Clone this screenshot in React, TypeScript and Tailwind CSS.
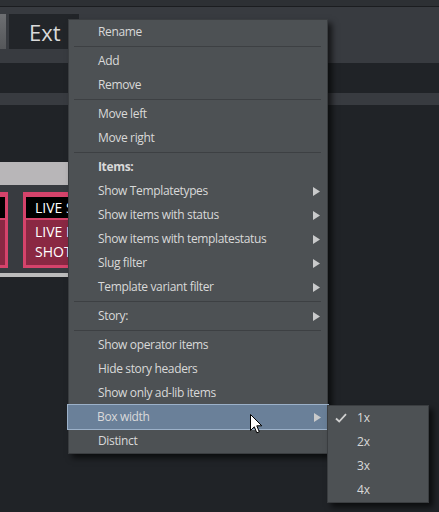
import React from "react";

type Row =
  | { kind: "sep" }
  | { kind: "item"; label: string; sub?: boolean; bold?: boolean; active?: boolean };

const rows: Row[] = [
  { kind: "item", label: "Rename" },
  { kind: "sep" },
  { kind: "item", label: "Add" },
  { kind: "item", label: "Remove" },
  { kind: "sep" },
  { kind: "item", label: "Move left" },
  { kind: "item", label: "Move right" },
  { kind: "sep" },
  { kind: "item", label: "Items:", bold: true },
  { kind: "item", label: "Show Templatetypes", sub: true },
  { kind: "item", label: "Show items with status", sub: true },
  { kind: "item", label: "Show items with templatestatus", sub: true },
  { kind: "item", label: "Slug filter", sub: true },
  { kind: "item", label: "Template variant filter", sub: true },
  { kind: "sep" },
  { kind: "item", label: "Story:", sub: true },
  { kind: "sep" },
  { kind: "item", label: "Show operator items" },
  { kind: "item", label: "Hide story headers" },
  { kind: "item", label: "Show only ad-lib items" },
  { kind: "item", label: "Box width", sub: true, active: true },
  { kind: "item", label: "Distinct" },
];

function SubArrow() {
  return (
    <svg width="7" height="9" viewBox="0 0 7 9" className="absolute right-[7px] top-[8px]">
      <polygon points="0,0 7,4.5 0,9" fill="#c9cacb" />
    </svg>
  );
}

function MenuRow({ row }: { row: Row }) {
  if (row.kind === "sep") {
    return (
      <div className="h-[5px] flex items-center pl-[5px] pr-[6px]">
        <div className="h-px w-full bg-[#3d4043]" />
      </div>
    );
  }
  return (
    <div
      className={
        "relative h-[24px] flex items-center pl-[29px] text-[12px] tracking-[-0.35px] " +
        (row.active ? "bg-[#6a8099] outline outline-1 outline-[#9cb1c9] -mx-px" : "") +
        (row.bold ? " font-bold" : "")
      }
    >
      <span className="text-[#d9d9d9]">{row.label}</span>
      {row.sub && <SubArrow />}
    </div>
  );
}

export default function App() {
  return (
    <div
      className="relative w-[439px] h-[512px] overflow-hidden bg-[#202327]"
      style={{ fontFamily: '"Open Sans", "Noto Sans", sans-serif' }}
    >
      {/* top strip */}
      <div className="h-[6px] bg-[#2d3034]" />
      <div className="h-px bg-[#1b1d20]" />

      {/* tab bar */}
      <div className="h-[56px] bg-[#383b40] flex items-start pt-[7px] gap-[3px]">
        <div className="w-[6px] h-[35px] bg-gradient-to-b from-[#6d6f72] to-[#55575a]" />
        <div className="w-[70px] h-[35px] bg-[#222529] flex items-center pl-[20px]">
          <span className="text-[22px] text-[#dadada] leading-none">Ext</span>
        </div>
      </div>

      <div className="h-[30px] bg-[#202327]" />
      <div className="h-[12px] bg-[#383b40]" />
      <div className="h-[57px]" />

      {/* rundown, only the part left of the menu is visible */}
      <div className="w-[68px] overflow-hidden">
        <div className="h-[23px] bg-[#b8b6b8]" />
        <div className="h-[88px] bg-[#383b40] pt-[7px] flex gap-[15px]">
          <div className="w-[8px] shrink-0 h-[76px] bg-[#d5436b] pt-[5px] pr-[3px] pb-[3px] flex flex-col gap-[2px]">
            <div className="h-[21px] bg-black" />
            <div className="flex-1 bg-[#8a2843]" />
          </div>
          <div className="w-[60px] shrink-0 h-[76px] bg-[#d5436b] pl-[3px] py-[3px] pt-[5px] flex flex-col gap-[2px]">
            <div className="h-[21px] bg-black flex items-center pl-[9px] text-[14px] text-white whitespace-nowrap">
              LIVE S
            </div>
            <div className="flex-1 bg-[#8a2843] pl-[9px] pt-[2px] text-[14px] leading-[20px] text-white whitespace-nowrap">
              LIVE I
              <br />
              SHOT
            </div>
          </div>
        </div>
        <div className="h-[4px] bg-[#bcbcbc]" />
      </div>

      {/* context menu */}
      <div className="absolute left-[68px] top-[19px] w-[260px] bg-[#4d5154] border border-[#3a3d40] shadow-[4px_4px_6px_rgba(0,0,0,0.65)]">
        {rows.map((r, i) => (
          <MenuRow key={i} row={r} />
        ))}
      </div>

      {/* submenu */}
      <div className="absolute left-[327px] top-[405px] w-[102px] bg-[#4d5154] border border-[#3a3d40] shadow-[4px_4px_6px_rgba(0,0,0,0.65)]">
        {["1x", "2x", "3x", "4x"].map((s, i) => (
          <div key={s} className="relative h-[24px] flex items-center pl-[29px] text-[12px] text-[#d9d9d9]">
            {i === 0 && (
              <svg width="12" height="10" viewBox="0 0 12 10" className="absolute left-[7px] top-[7px]">
                <path d="M1 5.5 L4.2 8.5 L11 1.2" stroke="#d0d0d0" strokeWidth="1.8" fill="none" />
              </svg>
            )}
            {s}
          </div>
        ))}
      </div>

      {/* mouse cursor */}
      <svg width="14" height="21" viewBox="0 0 14 21" className="absolute left-[250px] top-[414px]">
        <path
          d="M0.5 0.5 L0.5 16.5 L4.3 12.8 L6.8 18.8 L9.3 17.8 L6.8 11.8 L11.8 11.8 Z"
          fill="#ffffff"
          stroke="#000000"
          strokeWidth="1"
          strokeLinejoin="miter"
        />
      </svg>
    </div>
  );
}
